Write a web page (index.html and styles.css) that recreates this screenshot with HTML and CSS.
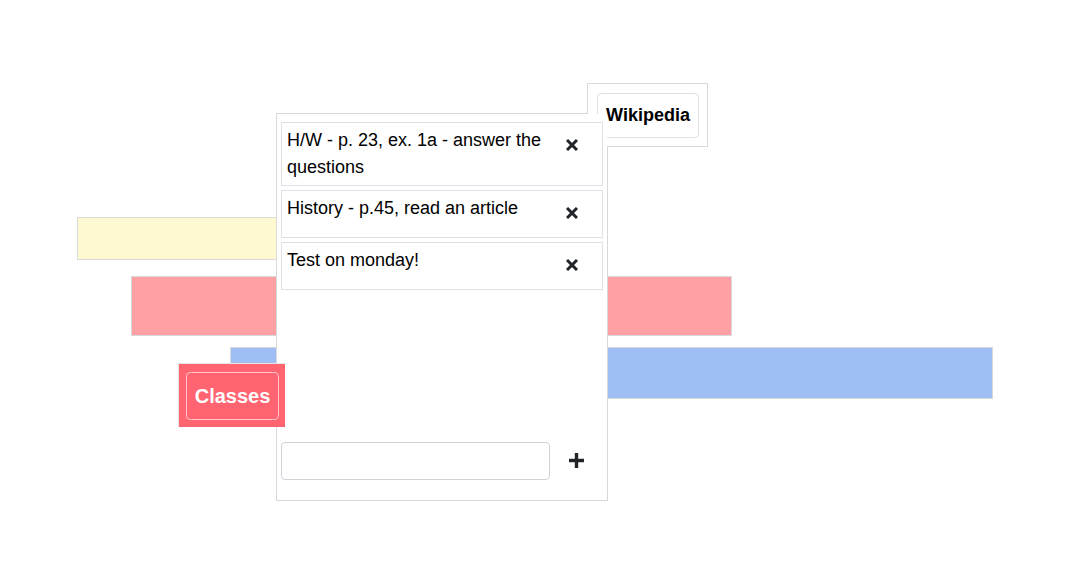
FILE: index.html
```html
<!DOCTYPE html>
<html lang="en">
<head>
<meta charset="utf-8">
<title>Board</title>
<link rel="stylesheet" href="styles.css">
</head>
<body>
<div class="canvas">
  <div class="bar bar-yellow"></div>
  <div class="bar bar-pink"></div>
  <div class="bar bar-blue"></div>

  <div class="panel">
    <div class="tab">
      <button class="tab-btn" type="button">Wikipedia</button>
    </div>
    <div class="panel-body">
      <ul class="list">
        <li class="item">
          <span class="item-text">H/W - p. 23, ex. 1a - answer the questions</span>
          <button class="icon-btn" type="button" aria-label="Remove">
            <svg width="12" height="12" viewBox="0 0 12 12"><path d="M1 1 L11 11 M11 1 L1 11" stroke="#212529" stroke-width="3" fill="none"/></svg>
          </button>
        </li>
        <li class="item">
          <span class="item-text">History - p.45, read an article</span>
          <button class="icon-btn" type="button" aria-label="Remove">
            <svg width="12" height="12" viewBox="0 0 12 12"><path d="M1 1 L11 11 M11 1 L1 11" stroke="#212529" stroke-width="3" fill="none"/></svg>
          </button>
        </li>
        <li class="item">
          <span class="item-text">Test on monday!</span>
          <button class="icon-btn" type="button" aria-label="Remove">
            <svg width="12" height="12" viewBox="0 0 12 12"><path d="M1 1 L11 11 M11 1 L1 11" stroke="#212529" stroke-width="3" fill="none"/></svg>
          </button>
        </li>
      </ul>
      <div class="add-row">
        <input class="add-input" type="text">
        <button class="add-btn" type="button" aria-label="Add">
          <svg width="15" height="15" viewBox="0 0 15 15"><path d="M7.5 0 V15 M0 7.5 H15" stroke="#212529" stroke-width="3.4" fill="none"/></svg>
        </button>
      </div>
    </div>
  </div>

  <div class="classes">
    <button class="classes-btn" type="button">Classes</button>
  </div>
</div>
</body>
</html>
```

FILE: styles.css
```css
* { box-sizing: border-box; }

html, body {
  margin: 0;
  padding: 0;
  background: #ffffff;
  font-family: "Liberation Sans", Arial, sans-serif;
  color: #000;
}

.canvas {
  position: relative;
  width: 1087px;
  height: 570px;
  overflow: hidden;
}

.bar {
  position: absolute;
  border: 1px solid #d9d9d9;
}

.bar-yellow {
  left: 77px;
  top: 217px;
  width: 260px;
  height: 43px;
  background: #fef9d1;
}

.bar-pink {
  left: 131px;
  top: 276px;
  width: 601px;
  height: 60px;
  background: #ffa0a5;
}

.bar-blue {
  left: 230px;
  top: 347px;
  width: 763px;
  height: 52px;
  background: #9fbff4;
}

.panel {
  position: absolute;
  left: 276px;
  top: 113px;
  width: 332px;
  height: 388px;
  background: #fff;
  border: 1px solid #d9d9d9;
}

.panel-body {
  position: relative;
  z-index: 2;
  height: 100%;
  background: #fff;
  display: flex;
  flex-direction: column;
  padding: 8px 0 20px 4px;
}

.tab {
  position: absolute;
  left: 310px;
  top: -31px;
  width: 121px;
  height: 64px;
  background: #fff;
  border: 1px solid #d9d9d9;
  padding: 9px 8px 0 9px;
  z-index: 1;
}

.tab-btn {
  display: block;
  width: 102px;
  height: 45px;
  padding: 0;
  background: #fff;
  border: 1px solid #dee2e6;
  border-radius: 4px;
  font-family: "Liberation Sans", Arial, sans-serif;
  font-weight: bold;
  font-size: 18px;
  color: #000;
}

.list {
  list-style: none;
  margin: 0;
  padding: 0 4px 0 0;
  display: flex;
  flex-direction: column;
  gap: 4px;
  flex: 1;
}

.item {
  display: flex;
  align-items: flex-start;
  border: 1px solid #dee2e6;
  background: #fff;
}

.item-text {
  flex: 1;
  padding: 4px 5px;
  font-size: 18px;
  line-height: 27px;
}

.icon-btn {
  width: 40px;
  height: 38px;
  margin: 4px 10px 4px 0;
  padding: 0 0 2px 0;
  border: 0;
  background: transparent;
  display: flex;
  align-items: center;
  justify-content: center;
}

.add-row {
  display: flex;
  align-items: center;
  padding-right: 4px;
}

.add-input {
  width: 269px;
  height: 38px;
  border: 1px solid #ced4da;
  border-radius: 4px;
  background: #fff;
  margin: 0;
}

.add-btn {
  width: 40px;
  height: 38px;
  margin-left: 7px;
  padding: 0 1px 1px 0;
  border: 0;
  background: transparent;
  display: flex;
  align-items: center;
  justify-content: center;
}

.classes {
  position: absolute;
  left: 178px;
  top: 363px;
  width: 107px;
  height: 64px;
  background: #ff6470;
  border: 1px solid #e6e6e6;
  border-right: 0;
  border-bottom: 0;
  padding: 8px 0 0 7px;
  z-index: 3;
}

.classes-btn {
  display: block;
  width: 93px;
  height: 48px;
  padding: 0;
  background: transparent;
  border: 1px solid #ffc4c8;
  border-radius: 4px;
  font-family: "Liberation Sans", Arial, sans-serif;
  font-weight: bold;
  font-size: 20px;
  color: #fff;
}
```
